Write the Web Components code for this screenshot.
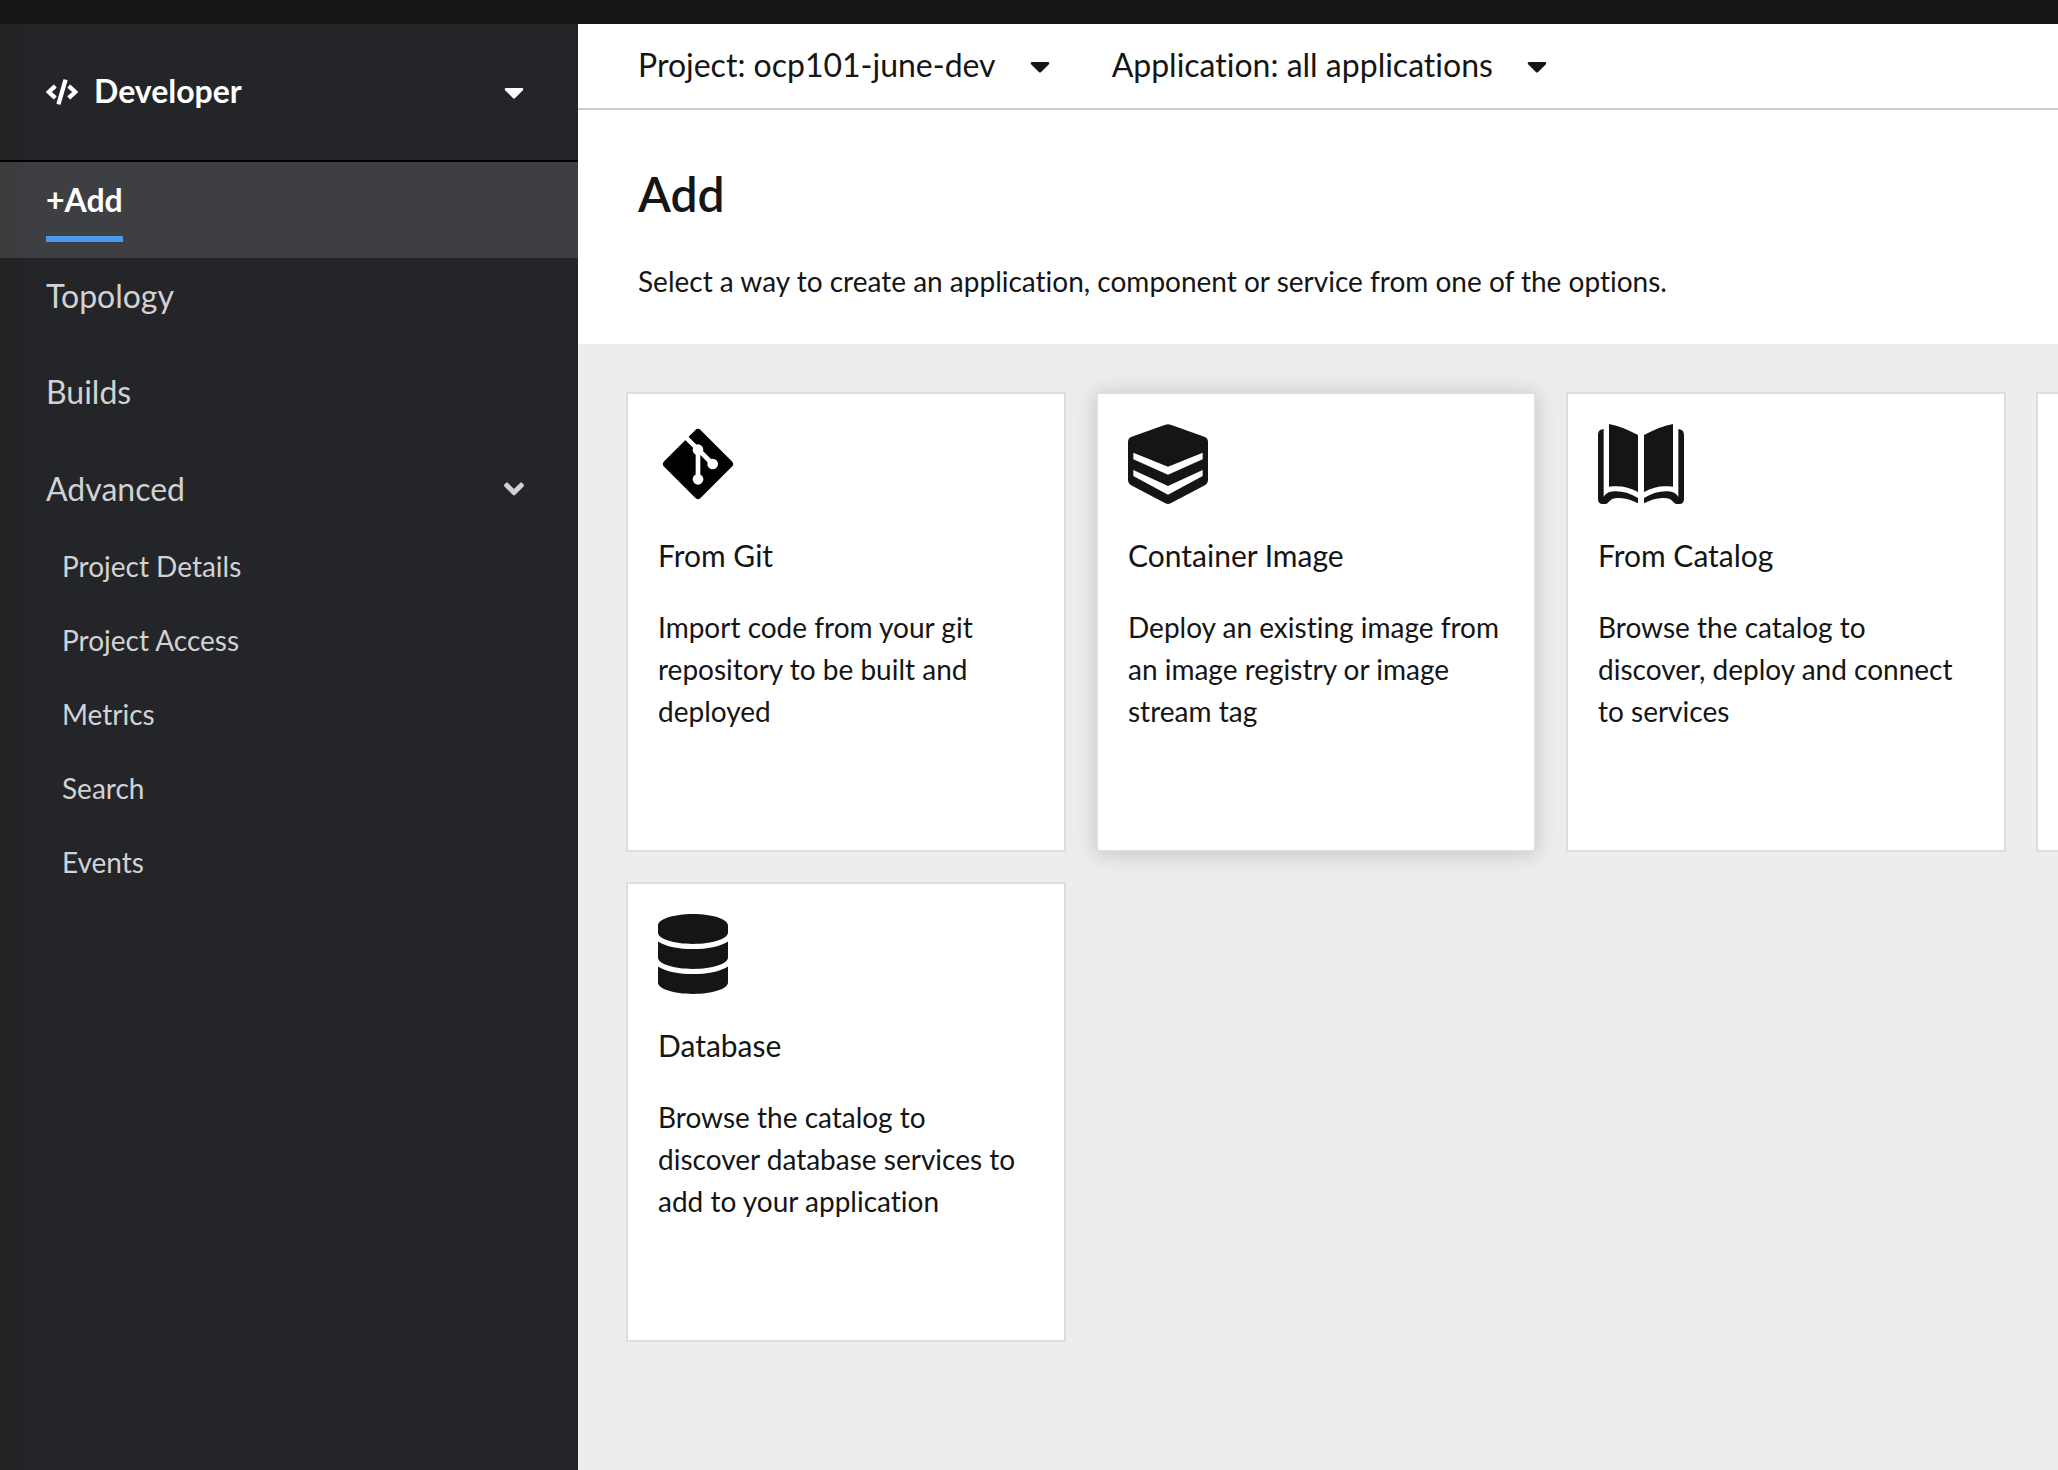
<!DOCTYPE html>
<html lang="en">
<head>
<meta charset="utf-8">
<title>Add</title>
<style>
  body { margin: 0; font-family: Lato, "Open Sans", sans-serif; font-variant-ligatures: none; color: #151515; background: #ededed; }
</style>
</head>
<body>
<dev-console></dev-console>

<script>
const caret = '<svg viewBox="0 0 320 512" width="20" height="32" fill="currentColor" aria-hidden="true"><path d="M31.3 192h257.3c17.8 0 26.7 21.5 14.1 34.1L174.1 354.8c-7.8 7.8-20.5 7.8-28.3 0L17.2 226.1C4.6 213.5 13.5 192 31.3 192z"/></svg>';
const angle = '<svg viewBox="0 0 320 512" width="20" height="32" fill="currentColor" aria-hidden="true"><path d="M143 352.3L7 216.3c-9.4-9.4-9.4-24.6 0-33.9l22.6-22.6c9.4-9.4 24.6-9.4 33.9 0l96.4 96.4 96.4-96.4c9.4-9.4 24.6-9.4 33.9 0l22.6 22.6c9.4 9.4 9.4 24.6 0 33.9l-136 136c-9.2 9.4-24.4 9.4-33.8 0z"/></svg>';
const code = '<svg viewBox="0 0 640 512" width="32" height="26" fill="currentColor" aria-hidden="true"><path d="M278.9 511.5l-61-17.7c-6.4-1.8-10-8.5-8.2-14.9L346.2 8.7c1.8-6.4 8.5-10 14.9-8.2l61 17.7c6.4 1.8 10 8.5 8.2 14.9L293.8 503.3c-1.9 6.4-8.5 10.1-14.9 8.2zm-114-112.2l43.5-46.4c4.6-4.9 4.3-12.7-.8-17.2L117 256l90.6-79.7c5.1-4.5 5.5-12.3.8-17.2l-43.5-46.4c-4.5-4.8-12.1-5.1-17-.5L3.8 247.2c-5.1 4.7-5.1 12.8 0 17.5l144.1 135.1c4.9 4.6 12.5 4.4 17-.5zm327.2.6l144.1-135.1c5.1-4.7 5.1-12.8 0-17.5L492.1 112.1c-4.8-4.5-12.4-4.3-17 .5L431.6 159c-4.6 4.9-4.3 12.7.8 17.2L523 256l-90.6 79.7c-5.1 4.5-5.5 12.3-.8 17.2l43.5 46.4c4.5 4.9 12.1 5.1 17 .6z"/></svg>';

const tileIcons = {
  git: `<svg viewBox="0 0 240 240" width="80" height="80" aria-hidden="true">
    <path d="M120 27l93 93-93 93-93-93z" fill="#000" stroke="#000" stroke-width="24" stroke-linejoin="round"/>
    <path d="M78 35l42 41 44 44M120 76v90" fill="none" stroke="#fff" stroke-width="14"/>
    <g fill="#fff"><circle cx="120" cy="77" r="16"/><circle cx="164" cy="120" r="16"/><circle cx="120" cy="166" r="16"/></g></svg>`,
  container: `<svg viewBox="0 0 240 240" width="80" height="80" aria-hidden="true">
    <path d="M112 2q8-3 16 0l101 36q11 4 11 16v115q0 9-8 14l-104 55q-8 4-16 0L8 183q-8-5-8-14V54q0-12 11-16z" fill="#151515"/>
    <path d="M16 86l104 42 104-42v20l-104 46L16 106zM16 138l104 48 104-48v18l-104 56L16 156z" fill="#fff"/></svg>`,
  catalog: `<svg viewBox="0 0 258 240" width="86" height="80" fill="#151515" aria-hidden="true">
    <g id="half"><path d="M33 0c29 5 59 18 87 33v171c-28-16-54-20-87-16z"/>
    <path d="M17 16C6 16 0 22 0 34v192q0 14 14 14h8q6 0 9-5c7-9 15-13 29-13 22-1 40 6 60 16v-16c-25-15-48-21-70-20-18 1-28 7-33 17z"/></g>
    <use href="#half" transform="translate(258) scale(-1 1)"/></svg>`,
  database: `<svg viewBox="0 0 448 512" width="70" height="80" fill="#151515" aria-hidden="true"><path d="M448 73.143v45.714C448 159.143 347.667 192 224 192S0 159.143 0 118.857V73.143C0 32.857 100.333 0 224 0s224 32.857 224 73.143zM448 176v102.857C448 319.143 347.667 352 224 352S0 319.143 0 278.857V176c48.125 33.143 136.208 48.572 224 48.572S399.874 209.143 448 176zm0 160v102.857C448 479.143 347.667 512 224 512S0 479.143 0 438.857V336c48.125 33.143 136.208 48.572 224 48.572S399.874 369.143 448 336z"/></svg>`
};

const reset = `
  *, *::before, *::after { box-sizing: border-box; }
  a { color: inherit; text-decoration: none; }
  button { font: inherit; font-variant-ligatures: inherit; color: inherit; background: none; border: 0; margin: 0; padding: 0; text-align: left; cursor: pointer; }
  svg { display: block; flex: none; }
`;

function define(name, render) {
  customElements.define(name, class extends HTMLElement {
    connectedCallback() {
      if (this.shadowRoot) return;
      const template = document.createElement('template');
      template.innerHTML = render(this);
      this.attachShadow({ mode: 'open' }).append(template.content.cloneNode(true));
    }
  });
}

define('console-masthead', () => `<style>
  :host { display: block; height: 24px; background: #151515; }
</style>`);

define('perspective-switcher', () => `<style>${reset}
  :host { display: block; border-bottom: 2px solid #000; }
  button { display: flex; align-items: center; gap: 16px; width: 100%; height: 136px; padding: 0 54px 0 46px;
    font-size: 32px; line-height: 48px; font-weight: 700; color: #fff; }
  span { flex: 1; padding-bottom: 2px; }
</style>
<button type="button">${code}<span><slot></slot></span>${caret}</button>`);

define('nav-item', () => `<style>${reset}
  :host { display: block; font-size: 32px; line-height: 48px; color: #d2d2d2; }
  a { display: flex; height: 96px; padding: 14px 46px; }
  span { border-bottom: 6px solid transparent; padding-bottom: 12px; height: 66px; }
  :host([current]) { color: #fff; background: rgba(255, 255, 255, 0.12); font-weight: 700; }
  :host([current]) span { border-color: #4a9bec; }
  :host([sub]) { font-size: 28px; line-height: 42px; }
  :host([sub]) a { height: 74px; padding: 16px 62px; }
  :host([sub]) span { border: 0; padding: 0; height: auto; }
</style>
<a href="#"><span><slot></slot></span></a>`);

define('nav-group', el => `<style>${reset}
  :host { display: block; }
  button { display: flex; justify-content: space-between; align-items: center; width: 100%;
    padding: 15px 54px 16px 46px; font-size: 32px; line-height: 48px; color: #d2d2d2; }
</style>
<button type="button" aria-expanded="true"><span>${el.getAttribute('label')}</span>${angle}</button>
<slot></slot>`);

define('console-sidebar', () => `<style>
  :host { display: block; flex: none; width: 578px; background: linear-gradient(90deg, #212223, #242529 50px); }
</style>
<perspective-switcher>Developer</perspective-switcher>
<nav>
  <nav-item current>+Add</nav-item>
  <nav-item>Topology</nav-item>
  <nav-item>Builds</nav-item>
  <nav-group label="Advanced">
    <nav-item sub>Project Details</nav-item>
    <nav-item sub>Project Access</nav-item>
    <nav-item sub>Metrics</nav-item>
    <nav-item sub>Search</nav-item>
    <nav-item sub>Events</nav-item>
  </nav-group>
</nav>`);

define('context-selector', () => `<style>${reset}
  :host { display: block; }
  button { display: flex; align-items: center; gap: 34px; font-size: 32px; line-height: 46px; white-space: nowrap; }
  span { padding-bottom: 2px; }
</style>
<button type="button"><span><slot></slot></span>${caret}</button>`);

define('context-bar', () => `<style>
  :host { display: flex; gap: 62px; height: 86px; box-sizing: border-box; padding: 18px 60px; background: #fff; border-bottom: 2px solid #ccc; }
</style>
<context-selector>Project: ocp101-june-dev</context-selector>
<context-selector>Application: all applications</context-selector>`);

define('page-heading', () => `<style>
  :host { display: block; padding: 52px 60px 42px; background: #fff; }
  h1 { margin: 0 0 34px; font-size: 48px; line-height: 64px; font-weight: 600; }
  p { margin: 0; font-size: 28px; line-height: 42px; }
</style>
<h1>Add</h1>
<p>Select a way to create an application, component or service from one of the options.</p>`);

define('add-tile', el => `<style>${reset}
  :host { display: block; }
  a { display: block; height: 100%; padding: 30px; background: #fff; border: 2px solid #ddd; }
  :host([raised]) a { box-shadow: 0 2px 20px rgba(0, 0, 0, 0.18); }
  .icon { height: 80px; }
  h2 { margin: 30px 0; font-size: 30px; line-height: 42px; font-weight: 400; }
  p { margin: 0; font-size: 28px; line-height: 42px; }
</style>
<a href="#">
  <div class="icon">${tileIcons[el.getAttribute('icon')] || ''}</div>
  <h2>${el.getAttribute('heading') || ''}</h2>
  <p><slot></slot></p>
</a>`);

define('tile-gallery', () => `<style>
  :host { display: grid; grid-template-columns: repeat(4, 440px); grid-auto-rows: 460px; gap: 30px; padding: 48px; overflow: hidden; }
</style>
<add-tile icon="git" heading="From Git">Import code from your git repository to be built and deployed</add-tile>
<add-tile icon="container" heading="Container Image" raised>Deploy an existing image from an image registry or image stream tag</add-tile>
<add-tile icon="catalog" heading="From Catalog">Browse the catalog to discover, deploy and connect to services</add-tile>
<add-tile></add-tile>
<add-tile icon="database" heading="Database">Browse the catalog to discover database services to add to your application</add-tile>`);

define('dev-console', () => `<style>
  :host { display: flex; flex-direction: column; min-height: 100vh; }
  .body { display: flex; flex: 1; }
  main { flex: 1; min-width: 0; background: #ededed; }
</style>
<console-masthead></console-masthead>
<div class="body">
  <console-sidebar></console-sidebar>
  <main>
    <context-bar></context-bar>
    <page-heading></page-heading>
    <tile-gallery></tile-gallery>
  </main>
</div>`);
</script>
</body>
</html>
